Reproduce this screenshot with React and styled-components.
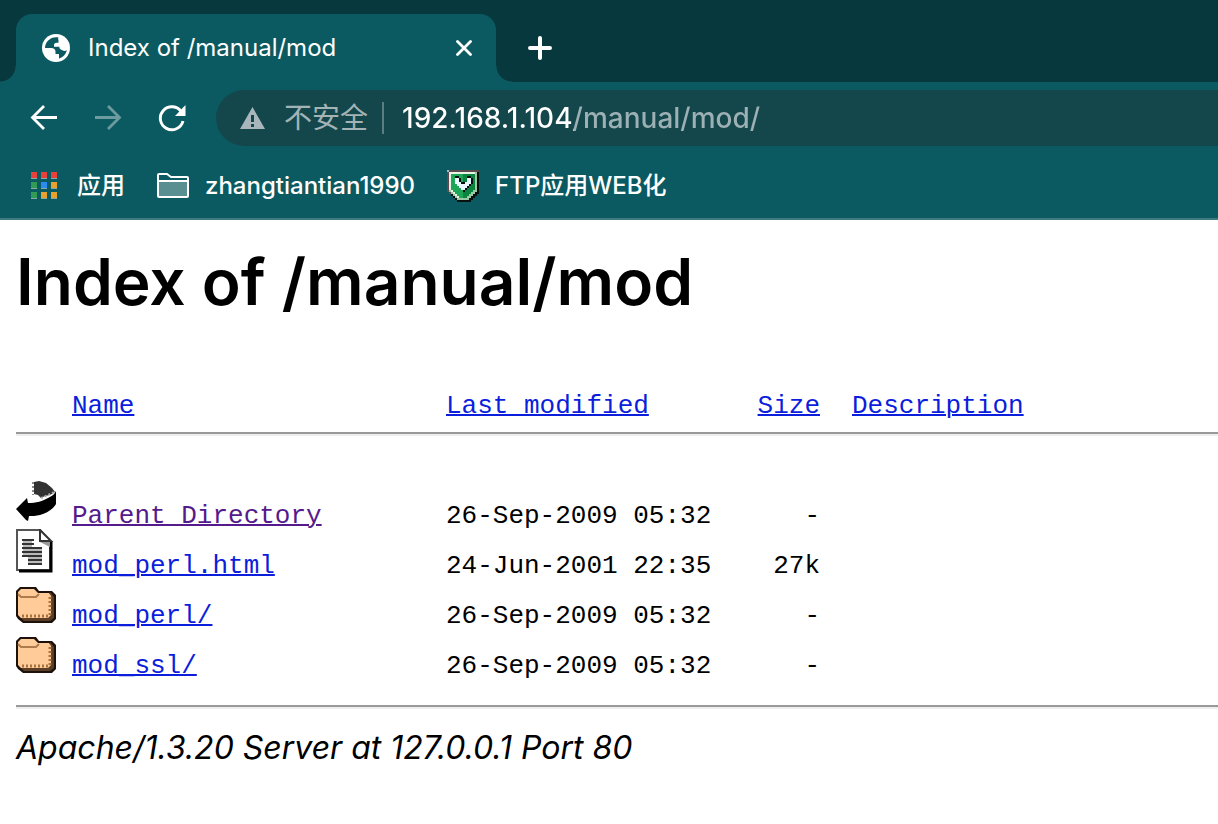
import React from "react";
import styled, { createGlobalStyle } from "styled-components";

const ui = `Inter, "Noto Sans CJK SC", sans-serif`;
const mono = `"Liberation Mono", monospace`;

const GlobalStyle = createGlobalStyle`
  * { box-sizing: border-box; }
  body { margin: 0; background: #fff; color: #000; font-family: ${ui}; }
  svg { display: block; flex: none; }
`;

const Chrome = styled.header`
  background: #0c5a61;
  border-bottom: 2px solid #3d7b81;
  color: #fff;
  overflow: hidden;
`;

const TabStrip = styled.div`
  display: flex;
  align-items: center;
  height: 82px;
  padding: 14px 16px 0;
  background: #06383d;
`;

const Tab = styled.div`
  position: relative;
  display: flex;
  align-items: center;
  width: 480px;
  height: 68px;
  padding: 0 20px 0 26px;
  border-radius: 16px 16px 0 0;
  background: #0c5a61;
  font-size: 24px;

  &::before,
  &::after {
    content: "";
    position: absolute;
    bottom: 0;
    width: 16px;
    height: 16px;
  }
  &::before {
    right: 100%;
    background: radial-gradient(circle at 0 0, transparent 15px, #0c5a61 16px);
  }
  &::after {
    left: 100%;
    background: radial-gradient(circle at 100% 0, transparent 15px, #0c5a61 16px);
  }
`;

const TabTitle = styled.span`
  flex: 1;
  margin-left: 18px;
  padding-bottom: 2px;
  white-space: nowrap;
`;

const Button = styled.button`
  display: flex;
  align-items: center;
  flex: none;
  padding: 0;
  border: 0;
  background: none;
  font: inherit;
`;

const IconButton = styled(Button)`
  justify-content: center;
  width: ${(p) => p.$size}px;
  height: ${(p) => p.$size}px;
  color: ${(p) => (p.disabled ? "#6d9ca0" : "#fff")};
`;

const NewTab = styled(IconButton)`
  margin-left: 28px;
`;

const Toolbar = styled.nav`
  display: flex;
  align-items: center;
  gap: 32px;
  height: 72px;
  padding-left: 28px;
`;

const AddressBar = styled.form`
  display: flex;
  align-items: center;
  flex: 1;
  height: 56px;
  margin-left: -4px;
  padding-left: 24px;
  border-radius: 28px 0 0 28px;
  background: #14474c;
  font-size: 28px;
`;

const Security = styled(Button)`
  gap: 18px;
  padding-right: 14px;
  border-right: 2px solid #5b7e82;
  color: #a3b3b6;
  line-height: 32px;
`;

const UrlInput = styled.input`
  flex: 1;
  min-width: 0;
  height: 40px;
  margin-left: 18px;
  padding: 0;
  border: 0;
  outline: 0;
  font: 500 28px ${ui};
  color: transparent;
  caret-color: #fff;
  background: linear-gradient(90deg, #fff 172px, #9db1b5 172px) text;
`;

const Bookmarks = styled.nav`
  display: flex;
  align-items: center;
  gap: 32px;
  height: 64px;
  padding-left: 31px;
`;

const Bookmark = styled.a`
  display: flex;
  align-items: center;
  gap: ${(p) => p.$gap}px;
  color: #fff;
  font-size: 24px;
  font-weight: 500;
  line-height: 32px;
  text-decoration: none;
  white-space: nowrap;
`;

const Page = styled.main`
  padding: 22px 0 40px 16px;
`;

const Title = styled.h1`
  margin: 0 0 71px;
  font-size: 64px;
  font-weight: 600;
  line-height: 80px;
`;

const Listing = styled.table`
  width: 100%;
  table-layout: fixed;
  border-spacing: 0;
  font-family: ${mono};
  font-size: 26px;
  line-height: 26px;
  white-space: pre;
`;

const Col = styled.col`
  width: ${(p) => (p.$w ? `${p.$w}px` : "auto")};
`;

const Head = styled.th`
  padding: 0 0 13px;
  border-bottom: 2px solid #999;
  box-shadow: 0 2px #eee;
  font-weight: 400;
  text-align: ${(p) => p.$align || "left"};
`;

const Body = styled.tbody`
  &::before {
    content: "";
    display: block;
    height: 45px;
  }
`;

const Cell = styled.td`
  padding: 0;
  vertical-align: baseline;
  text-align: ${(p) => p.$align || "left"};

  svg { display: inline-block; vertical-align: baseline; }
`;

const Link = styled.a`
  color: ${(p) => (p.$visited ? "#551a8b" : "#0b1edc")};
  text-decoration-thickness: 2px;
`;

const Rule = styled.hr`
  height: 4px;
  margin: 26px 0 19px;
  border: 0;
  border-top: 2px solid #999;
  background: #eee;
`;

const Signature = styled.address`
  font-size: 32px;
  line-height: 40px;
`;

const Globe = () => (
  <svg width="28" height="28" viewBox="0 0 28 28" aria-hidden="true">
    <circle cx="14" cy="14" r="14" fill="#fff" />
    <path
      fill="#0c5a61"
      d="M16.500 3.400C9 2 3 7.500 3 14h6c3 0 4.500 1.500 4.500 4v2H17v4.600c4-1.200 7-4.300 7.800-8.600-1 1-2.500 1.200-4 .6l-2-1c-1-.6-1.500-1.800-1.500-2.900H12v-1.500c0-1.500 1-2.500 2.500-2.500h2V6.500c0-1-.8-2.100 0-3.100z"
    />
  </svg>
);

const Close = () => (
  <svg width="16" height="16" viewBox="0 0 16 16" aria-hidden="true">
    <path d="M1.500 1.500l13 13m0-13l-13 13" stroke="currentColor" strokeWidth="2.800" strokeLinecap="round" />
  </svg>
);

const Plus = () => (
  <svg width="24" height="24" viewBox="0 0 24 24" aria-hidden="true">
    <path d="M12 2v20M2 12h20" stroke="currentColor" strokeWidth="4" strokeLinecap="round" />
  </svg>
);

const Arrow = ({ forward }) => (
  <svg width="28" height="28" viewBox="0 0 28 28" fill="none" stroke="currentColor" strokeWidth="2.800" aria-hidden="true">
    <path d={forward ? "M1 13.500h24M14 2l11.500 11.500L14 25" : "M27 13.500H4M14 2L2.500 13.500 14 25"} />
  </svg>
);

const Reload = () => (
  <svg width="28" height="28" viewBox="0 0 28 28" aria-hidden="true">
    <path d="M23.500 8A11.500 11.500 0 1 0 25 17" fill="none" stroke="currentColor" strokeWidth="2.900" />
    <path d="M27.500 1v11H17z" fill="currentColor" />
  </svg>
);

const Warning = () => (
  <svg width="26" height="24" viewBox="0 0 26 24" aria-hidden="true">
    <path d="M12.500 1L25 23H0z" fill="#a9b6bc" />
    <path d="M11 9h3v7h-3zM11 18h3v3h-3z" fill="#14474c" />
  </svg>
);

const appColors = ["#e8413c", "#e8413c", "#e8413c", "#319b56", "#2b8cf0", "#e8a12c", "#319b56", "#e8a12c", "#e8a12c"];

const AppsGrid = () => (
  <svg width="26" height="28" viewBox="0 0 26 28" shapeRendering="crispEdges" aria-hidden="true">
    {appColors.map((fill, i) => {
      const x = (i % 3) * 10;
      const y = Math.floor(i / 3) * 10;
      return (
        <g key={i}>
          <rect x={x} y={y} width="6" height="6" fill={fill} />
          <rect x={x} y={y + 6} width="6" height="1" fill="#84a9a6" />
        </g>
      );
    })}
  </svg>
);

const BookmarkFolder = () => (
  <svg width="32" height="26" viewBox="0 0 32 26" aria-hidden="true">
    <path d="M2 8h28v15H2z" fill="#598f91" />
    <path d="M1 2a1 1 0 0 1 1-1h8l4 3h16a1 1 0 0 1 1 1v18a1 1 0 0 1-1 1H2a1 1 0 0 1-1-1zM1 8h30" fill="none" stroke="#fff" strokeWidth="2" />
  </svg>
);

const shieldRows = [
  "lggggggggggggggg",
  "gwwwwwwwwwwwwwsk",
  "gwGGGGGGddddddsk",
  "gwGGkkGGddkkddsk",
  "gwGGWWkGddWWkdsk",
  "gwGGWWkGddWWkdsk",
  "gwGGWWWkkWWWkdsk",
  "gwGGGWWWWWWkddsk",
  "gwGGGGWWWWkdddsk",
  "gwGGGGGWWkddddsk",
  "gswGGGGGkddddssk",
  ".gswGGGGddddsskk",
  "..kswGGGdddsskk.",
  "...kswGGddsskk..",
  "....ksssssskk...",
  ".....kkkkkkk....",
];
const shieldColors = { l: "#9fb8c8", g: "#5c4a4c", w: "#e6f3e6", W: "#eaf8ff", s: "#9cc9a4", G: "#1fa556", d: "#0b8440", k: "#06100d" };

const Shield = () => (
  <svg width="32" height="32" viewBox="0 0 16 16" shapeRendering="crispEdges" aria-hidden="true">
    {shieldRows.map((row, y) =>
      [...row].map((c, x) => c !== "." && <rect key={`${x}-${y}`} x={x} y={y} width="1" height="1" fill={shieldColors[c]} />)
    )}
  </svg>
);

const BackIcon = () => (
  <svg width="40" height="44" viewBox="0 0 40 44" role="img" aria-label="Back">
    <path d="M18 3l5-1 7 2 6 5 3 4-5 3-5 1-4 2-3-3-4-1z" fill="#333" />
    <path d="M17 3v13" stroke="#888" strokeWidth="2" strokeDasharray="2 2" />
    <path d="M0 30l11-11 1 5c8 0 15-2 20-5 4-2 7-4 8-7v13c-3 5-9 9-16 11-4 1-8 1-11 1l-1 5-2-1z" fill="#000" />
    <path d="M25 19l7-3 6-3" fill="none" stroke="#aaa" strokeWidth="2" strokeDasharray="2 2" />
  </svg>
);

const TextIcon = () => (
  <svg width="40" height="44" viewBox="0 0 40 44" role="img" aria-label="Text file">
    <path d="M1 1h23l10 11v29H1z" fill="#fff" stroke="#555" strokeWidth="2" />
    <path d="M35 12v30H3" fill="none" stroke="#000" strokeWidth="3" />
    <path d="M24 1v11h11z" fill="#fff" stroke="#333" strokeWidth="2" />
    <path d="M24 13h10v5z" fill="#999" />
    <path d="M7 11h9v8H7zM7 19h19v8H7zM12 27h14v9H12z" fill="#bbb" />
    <path d="M6 11h12M6 15h12M6 19h20M6 23h20M6 27h20M12 31h14M12 35h14" stroke="#333" strokeWidth="2" />
  </svg>
);

const FolderIcon = () => (
  <svg width="40" height="44" viewBox="0 0 40 44" role="img" aria-label="Folder">
    <path d="M4 8h16l3 4h13l4 4v24l-4 4H7l-5-4-2-3V12z" fill="#1c120b" />
    <path d="M34 13l4 5v21l-4 3H8l-3-3h27z" fill="#5c3d25" />
    <path d="M2 13l3-3h13l4 4h11l2 3v19l-3 3H5l-3-3z" fill="#fc9" />
    <path d="M2 15l3 3h15l3-3" fill="none" stroke="#b07c4e" strokeWidth="2" />
    <path d="M34 18v20M6 37h26" fill="none" stroke="#a8733f" strokeWidth="3" strokeDasharray="2 2" />
  </svg>
);

const icons = { back: BackIcon, text: TextIcon, folder: FolderIcon };

const entries = [
  { icon: "back", name: "Parent Directory", date: "26-Sep-2009 05:32", size: "-", visited: true },
  { icon: "text", name: "mod_perl.html", date: "24-Jun-2001 22:35", size: "27k" },
  { icon: "folder", name: "mod_perl/", date: "26-Sep-2009 05:32", size: "-" },
  { icon: "folder", name: "mod_ssl/", date: "26-Sep-2009 05:32", size: "-" },
];

export default function App() {
  return (
    <>
      <GlobalStyle />
      <Chrome>
        <TabStrip>
          <Tab>
            <Globe />
            <TabTitle>Index of /manual/mod</TabTitle>
            <IconButton $size={24} aria-label="Close tab"><Close /></IconButton>
          </Tab>
          <NewTab $size={32} aria-label="New tab"><Plus /></NewTab>
        </TabStrip>
        <Toolbar>
          <IconButton $size={32} aria-label="Back"><Arrow /></IconButton>
          <IconButton $size={32} aria-label="Forward" disabled><Arrow forward /></IconButton>
          <IconButton $size={32} aria-label="Reload"><Reload /></IconButton>
          <AddressBar onSubmit={(e) => e.preventDefault()}>
            <Security type="button"><Warning />不安全</Security>
            <UrlInput aria-label="Address" defaultValue="192.168.1.104/manual/mod/" />
          </AddressBar>
        </Toolbar>
        <Bookmarks>
          <Bookmark href="#" $gap={20}><AppsGrid />应用</Bookmark>
          <Bookmark href="#" $gap={16}><BookmarkFolder />zhangtiantian1990</Bookmark>
          <Bookmark href="#" $gap={16}><Shield />FTP应用WEB化</Bookmark>
        </Bookmarks>
      </Chrome>
      <Page>
        <Title>Index of /manual/mod</Title>
        <Listing>
          <colgroup>
            <Col $w={56} />
            <Col $w={374} />
            <Col $w={270} />
            <Col $w={104} />
            <Col $w={32} />
            <Col />
          </colgroup>
          <thead>
            <tr>
              <Head />
              <Head><Link href="#">Name</Link></Head>
              <Head><Link href="#">Last modified</Link></Head>
              <Head $align="right"><Link href="#">Size</Link></Head>
              <Head />
              <Head><Link href="#">Description</Link></Head>
            </tr>
          </thead>
          <Body>
            {entries.map(({ icon, name, date, size, visited }) => {
              const Icon = icons[icon];
              return (
                <tr key={name}>
                  <Cell><Icon /></Cell>
                  <Cell><Link href="#" $visited={visited}>{name}</Link></Cell>
                  <Cell>{date}</Cell>
                  <Cell $align="right">{size}</Cell>
                  <Cell />
                  <Cell />
                </tr>
              );
            })}
          </Body>
        </Listing>
        <Rule />
        <Signature>Apache/1.3.20 Server at 127.0.0.1 Port 80</Signature>
      </Page>
    </>
  );
}
